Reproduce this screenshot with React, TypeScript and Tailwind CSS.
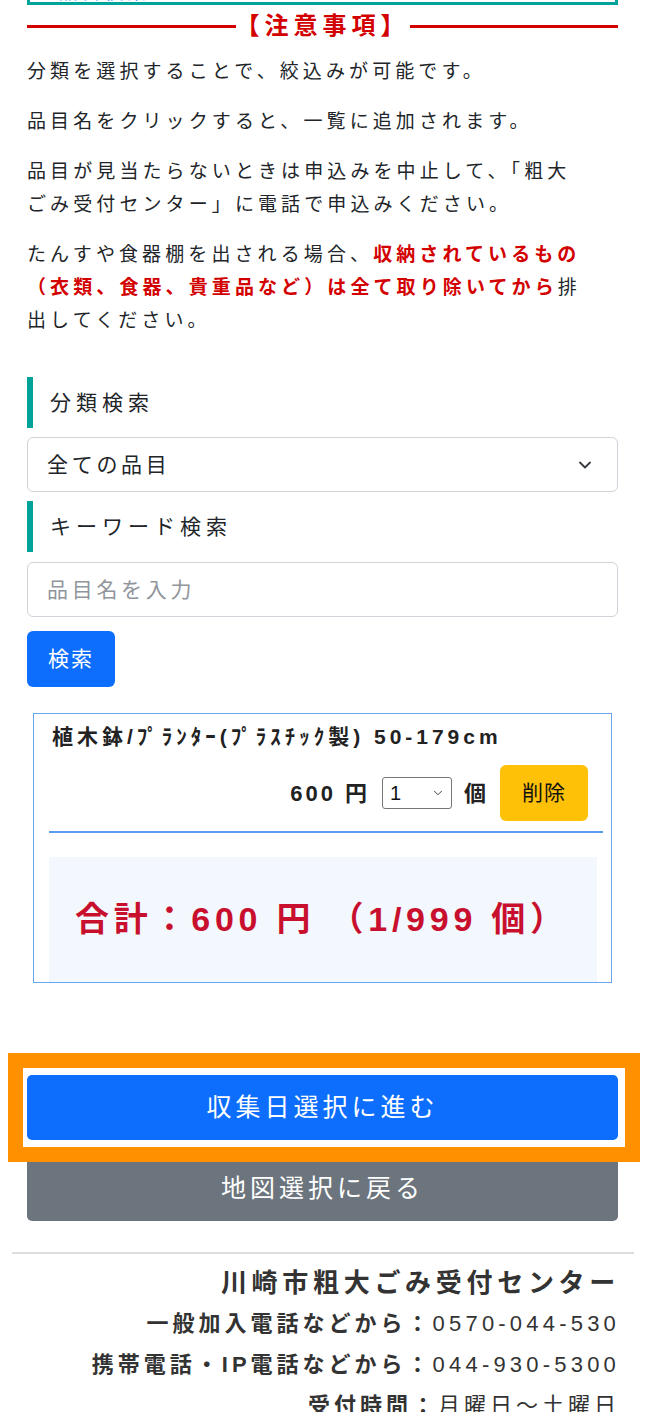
import { ChevronDown } from 'lucide-react';

const jp = "font-['Liberation_Sans','Noto_Sans_CJK_JP',sans-serif]";

function SectionHeading({ label }: { label: string }) {
  return (
    <div className="flex h-[51px] items-center border-l-[6px] border-[#00a39a] pl-[17px]">
      <span className="text-[21px] tracking-[5px] text-[#212529]">{label}</span>
    </div>
  );
}

export default function App() {
  return (
    <div className={`${jp} w-[650px] bg-white text-[#212529]`}>
      <div className="pl-[12px] pr-[16px]">
        <div className="pl-[15px] pr-[16px]">
          {/* cut-off detail box */}
          <div className="h-[5px] overflow-hidden">
            <div className="-mt-[30px] flex h-[35px] items-end justify-between border-[3px] border-[#00a39a] pl-[6px]">
              <span className="text-[19px] leading-none tracking-[0.2em] text-[#0d6efd]">▼品目検索</span>
              <span className="mb-[2px] h-[10px] w-[26px] border-b-2 border-[#4cbfb8]" />
            </div>
          </div>

          {/* notice heading */}
          <div className="mt-[5px] flex items-center">
            <div className="h-[3px] flex-1 bg-[#d30000]" />
            <span className="text-[24px] font-bold leading-[32px] tracking-[5px] text-[#d30000]">
              【注意事項】
            </span>
            <div className="h-[3px] flex-1 bg-[#d30000]" />
          </div>

          <div className="mt-[13px] flex flex-col gap-[17px] text-[19px] leading-[33px] tracking-[4.1px]">
            <p>分類を選択することで、絞込みが可能です。</p>
            <p>品目名をクリックすると、一覧に追加されます。</p>
            <p>
              品目が見当たらないときは申込みを中止して、「粗大
              <br />
              ごみ受付センター」に電話で申込みください。
            </p>
            <p>
              たんすや食器棚を出される場合、
              <span className="font-bold text-[#d30000]">
                収納されているもの
                <br />
                （衣類、食器、貴重品など）は全て取り除いてから
              </span>
              排<br />
              出してください。
            </p>
          </div>

          {/* search */}
          <div className="mt-[40px]">
            <SectionHeading label="分類検索" />
            <div className="mt-[9px] flex h-[55px] items-center justify-between rounded-[6px] border border-[#ced4da] pl-[19px] pr-[22px]">
              <span className="text-[21px] tracking-[3.7px]">全ての品目</span>
              <ChevronDown className="h-[20px] w-[20px] text-[#343a40]" strokeWidth={2.2} />
            </div>
            <div className="mt-[9px]">
              <SectionHeading label="キーワード検索" />
            </div>
            <input
              type="text"
              placeholder="品目名を入力"
              className="mt-[10px] block h-[55px] w-full rounded-[6px] border border-[#ced4da] pl-[19px] text-[21px] tracking-[3.7px] placeholder-[#8f959b] outline-none"
            />
            <button className="mt-[14px] h-[56px] w-[88px] rounded-[6px] bg-[#0d6efd] text-[21px] tracking-[2px] text-white">
              検索
            </button>
          </div>

          {/* cart */}
          <div className="ml-[6px] mr-[6px] mt-[26px] border border-[#6aa6f0] pl-[15px] pr-[8px]">
            <div className="border-b-2 border-[#5a9cf0] pb-[10px] pr-[15px] pt-[8px]">
              <div className="pl-[3px] text-[21px] font-bold leading-[30px] tracking-[0.19em] text-[#222]">
                植木鉢/ﾌﾟﾗﾝﾀｰ(ﾌﾟﾗｽﾁｯｸ製) 50-179cm
              </div>
              <div className="mt-[13px] flex items-center justify-end">
                <span className="text-[22px] font-bold tracking-[3px] text-[#222]">600 円</span>
                <div className="ml-[12px] flex h-[32px] w-[70px] items-center justify-between rounded-[3px] border border-[#767676] pl-[7px] pr-[6px]">
                  <span className="text-[20px] text-[#111]">1</span>
                  <ChevronDown className="h-[14px] w-[14px] text-[#333]" strokeWidth={1.6} />
                </div>
                <span className="ml-[12px] text-[22px] font-bold text-[#222]">個</span>
                <button className="ml-[14px] h-[56px] w-[88px] rounded-[6px] bg-[#ffc107] text-[21px] tracking-[1px] text-[#111]">
                  削除
                </button>
              </div>
            </div>
            <div className="mr-[6px] mt-[24px] flex h-[125px] items-center bg-[#f3f7fe] pl-[26px]">
              <span className="text-[34px] font-bold tracking-[0.14em] text-[#c8102e]">合計：600 円 （1/999 個）</span>
            </div>
          </div>

          {/* actions */}
          <div className="relative mt-[92px]">
            <button className="block h-[65px] w-full rounded-[5px] bg-[#0d6efd] text-[25px] tracking-[4px] text-white">
              収集日選択に進む
            </button>
            <div className="pointer-events-none absolute -bottom-[22px] -left-[19px] -right-[22px] -top-[22px] border-[15px] border-[#ff9100]" />
          </div>
          <button className="mt-[16px] block h-[65px] w-full rounded-[5px] bg-[#6c757d] text-[25px] tracking-[4px] text-white">
            地図選択に戻る
          </button>
        </div>

        {/* footer */}
        <div className="mt-[31px] border-t-2 border-[#dddddd] pr-[14px] pt-[12px] text-right text-[#333]">
          <div className="text-[26px] font-bold leading-[34px] tracking-[4.7px]">川崎市粗大ごみ受付センター</div>
          <div className="mt-[7px] text-[22px] leading-[34px] tracking-[4px]">
            <span className="font-bold">一般加入電話などから：</span>
            <span className="tracking-[4.2px]">0570-044-530</span>
          </div>
          <div className="mt-[7px] text-[22px] leading-[34px] tracking-[4px]">
            <span className="font-bold">携帯電話・IP電話などから：</span>
            <span className="tracking-[4.2px]">044-930-5300</span>
          </div>
          <div className="mt-[7px] text-[22px] leading-[34px] tracking-[4px]">
            <span className="font-bold">受付時間：</span>月曜日～土曜日
          </div>
        </div>
      </div>
    </div>
  );
}
